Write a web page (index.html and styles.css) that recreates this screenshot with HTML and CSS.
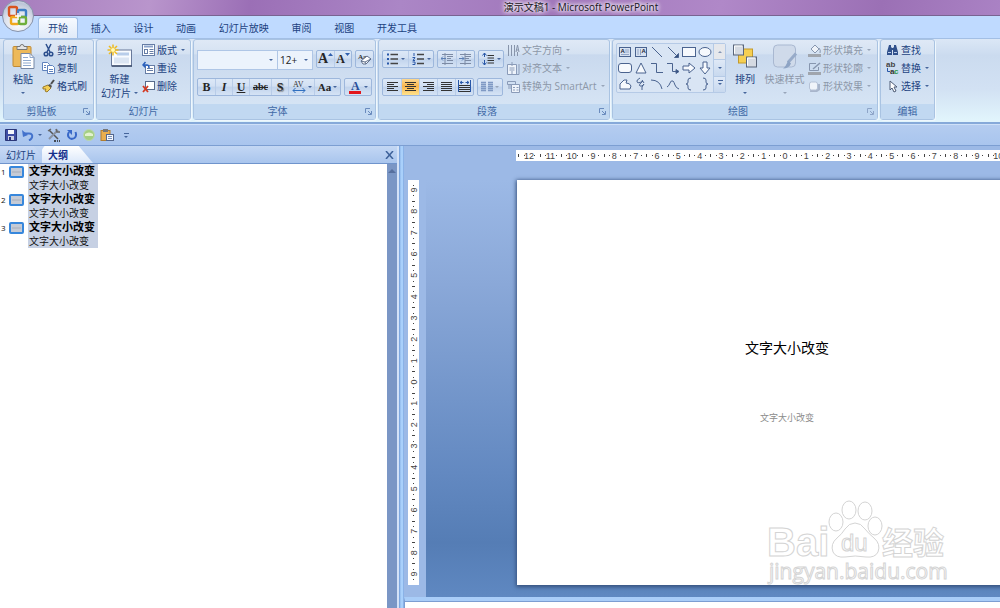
FILE: index.html
```html
<!DOCTYPE html>
<html lang="zh-CN">
<head>
  <meta charset="UTF-8">
  <meta name="viewport" content="width=device-width, initial-scale=1.0">
  <title>演示文稿1 - Microsoft PowerPoint</title>
  <link rel="stylesheet" href="styles.css">
</head>
<body>
  <header class="title-bar">
    <h1>演示文稿1 - Microsoft PowerPoint</h1>
    <button class="office-button" aria-label="Office">
      <svg width="22" height="22" viewBox="0 0 22 22" fill="none" stroke-width="2.4">
        <rect x="2" y="2" width="8" height="9" rx="1.5" stroke="#d9541e"/>
        <rect x="11" y="5" width="8" height="7" rx="1.5" stroke="#3f7fc6"/>
        <rect x="4" y="12" width="8" height="7" rx="1.5" stroke="#f0a81c"/>
        <rect x="12" y="12" width="7" height="7" rx="1.5" stroke="#6fae3c"/>
        <path d="M8 11h6M11 8v7" stroke="#fff" stroke-width="1.5"/>
      </svg>
    </button>
  </header>

  <nav class="ribbon-tabs">
    <button class="active">开始</button>
    <button>插入</button>
    <button>设计</button>
    <button>动画</button>
    <button>幻灯片放映</button>
    <button>审阅</button>
    <button>视图</button>
    <button>开发工具</button>
  </nav>

  <div class="ribbon">
    <!-- Clipboard -->
    <section class="group clipboard">
      <div class="group-body">
        <button class="big">
          <svg width="24" height="28" viewBox="0 0 24 28">
            <rect x="2" y="4" width="18" height="20" rx="1" fill="#edb95a" stroke="#c08a35"/>
            <path d="M6 6V4h3a2 2 0 0 1 4 0h3v3H6z" fill="#e4e4e4" stroke="#777"/>
            <path d="M10 11h9l4 4v11H10z" fill="#fff" stroke="#7587a5"/>
            <path d="M19 11v4h4M12 15h5M12 18h8M12 20.500h8M12 23h8" fill="none" stroke="#8fa9cf"/>
          </svg>
          <span>粘贴</span>
          <span><i class="arrow"></i></span>
        </button>
        <div class="stack">
          <button><svg width="13" height="14" viewBox="0 0 13 14" fill="none" stroke="#2c4f8e" stroke-width="1.500"><path d="M4 1l4 8M9 1L5 9"/><circle cx="4" cy="11" r="1.800"/><circle cx="9" cy="11" r="1.800"/></svg>剪切</button>
          <button><svg width="13" height="14" viewBox="0 0 13 14" fill="#fff" stroke="#5f82bd"><path d="M.5 1.500h5l2 2v6h-7z"/><path d="M5.500 4.500h5l2 2v6h-7z"/><path d="M7 8.500h4M7 10.500h4M2 4.500h2M2 6.500h2"/></svg>复制</button>
          <button><svg width="13" height="14" viewBox="0 0 13 14"><path d="M1 8l5-2 3 3-4 4-2-1 1-2-3 0z" fill="#f4cf55" stroke="#9a7b2b"/><path d="M6 6l2-1 2 2-1 2z" fill="#555"/><path d="M9 5l3-4" stroke="#4c4c4c" stroke-width="2"/></svg>格式刷</button>
        </div>
      </div>
      <footer><h2>剪贴板</h2><button class="launcher" aria-label="剪贴板选项"><svg width="7" height="7" viewBox="0 0 7 7" fill="none" stroke="#6a8bbd"><path d="M.5 5V.5H5M3 3l3 3M6.500 3v3.500H3"/></svg></button></footer>
    </section>

    <!-- Slides -->
    <section class="group slides">
      <div class="group-body">
        <button class="big">
          <svg width="26" height="26" viewBox="0 0 26 26">
            <rect x="4.500" y="6.500" width="20" height="16" fill="#f8fbff" stroke="#68799a"/>
            <path d="M5 22.500h20" stroke="#3d4d6b" stroke-width="1.500"/>
            <rect x="10" y="9" width="12" height="3" fill="#b8cdea"/>
            <rect x="7" y="14" width="15" height="6" fill="#dbe5f3"/>
            <path d="M6 1v11M.5 6.500h11M2 2.500l8 8M10 2.500l-8 8" stroke="#eebb20" stroke-width="1.500"/>
            <circle cx="6" cy="6.500" r="2" fill="#fff9b8"/>
          </svg>
          <span>新建</span>
          <span>幻灯片<i class="arrow"></i></span>
        </button>
        <div class="stack">
          <button><svg width="13" height="12" viewBox="0 0 13 12" fill="none" stroke="#667da5"><rect x=".5" y=".5" width="12" height="11" fill="#fff"/><path d="M2 2.500h9" stroke="#8ba3ca" stroke-width="2"/><rect x="2.500" y="5.500" width="3" height="4"/><path d="M7.500 5.500h4M7.500 7.500h4M7.500 9.500h4"/></svg>版式<i class="arrow"></i></button>
          <button><svg width="13" height="14" viewBox="0 0 13 14" fill="none" stroke="#667da5"><rect x="3.500" y="4.500" width="9" height="8" fill="#fff"/><path d="M5 7.500h6M5 9.500h6"/><path d="M1 4h4q2 0 2 3M3.500 1L1 4l2.500 2.500" stroke="#2a60bd" stroke-width="1.500"/></svg>重设</button>
          <button><svg width="13" height="13" viewBox="0 0 13 13" fill="none"><rect x="3.500" y="1.500" width="9" height="8" fill="#fff" stroke="#596b8b"/><path d="M1 6l5 6M6 6l-5 6" stroke="#d43a22" stroke-width="1.800"/></svg>删除</button>
        </div>
      </div>
      <footer><h2>幻灯片</h2></footer>
    </section>

    <!-- Font -->
    <section class="group font">
      <div class="group-body rows">
        <div class="row">
          <div class="combos">
            <select class="font-name" aria-label="字体"><option></option></select>
            <select class="font-size" aria-label="字号"><option>12+</option></select>
          </div>
          <div class="tools">
            <button class="serif grow" aria-label="增大字号">A<svg width="5" height="4" viewBox="0 0 5 4"><path d="M0 3h5L2.500 0z" fill="#2f5fae"/></svg></button>
            <button class="serif shrink" aria-label="缩小字号">A<svg width="5" height="4" viewBox="0 0 5 4"><path d="M0 0h5L2.500 3z" fill="#2f5fae"/></svg></button>
          </div>
          <div class="tools">
            <button aria-label="清除格式"><svg width="15" height="14" viewBox="0 0 15 14"><text x="1" y="7" font-size="7" font-weight="700" font-family="Liberation Serif" fill="#333">Aa</text><path d="M4 9l6-5 4 3-5 5H6z" fill="#fff" stroke="#60708c"/><path d="M4 9l4 1 6-3M8 10l1 2" fill="none" stroke="#60708c"/></svg></button>
          </div>
        </div>
        <div class="row">
          <div class="tools">
            <button class="serif bold">B</button>
            <button class="serif italic">I</button>
            <button class="serif underline">U</button>
            <button class="serif strike">abc</button>
            <button class="serif shadow">S</button>
            <button class="wide" aria-label="字符间距"><svg width="14" height="14" viewBox="0 0 14 14"><text x="1" y="7" font-size="8" font-family="Liberation Serif" fill="#333">AV</text><path d="M1 10.500h12M3.500 8L1 10.500 3.500 13M10.500 8l2.500 2.500-2.500 2.500" fill="none" stroke="#2f6fc0"/></svg><i class="arrow"></i></button>
            <button class="serif wide">Aa<i class="arrow"></i></button>
          </div>
          <div class="tools">
            <button class="wide" aria-label="字体颜色"><svg width="14" height="16" viewBox="0 0 14 16"><text x="3" y="11" font-size="12" font-weight="700" font-family="Liberation Serif" fill="#2a4f98">A</text><rect x="1" y="12" width="12" height="3" fill="#e2161c"/></svg><i class="arrow"></i></button>
          </div>
        </div>
      </div>
      <footer><h2>字体</h2><button class="launcher" aria-label="字体选项"><svg width="7" height="7" viewBox="0 0 7 7" fill="none" stroke="#6a8bbd"><path d="M.5 5V.5H5M3 3l3 3M6.500 3v3.500H3"/></svg></button></footer>
    </section>

    <!-- Paragraph -->
    <section class="group paragraph">
      <div class="group-body">
        <div class="rows">
          <div class="row">
            <div class="tools">
              <button class="wide" aria-label="项目符号"><svg width="13" height="12" viewBox="0 0 13 12"><path d="M4.500 1.500H12M4.500 6H12M4.500 10.500H12" stroke="#444" stroke-width="1.500"/><path d="M1 .5h2v2H1zM1 5h2v2H1zM1 9.500h2v2H1z" fill="#2857a8"/></svg><i class="arrow"></i></button>
              <button class="wide" aria-label="编号"><svg width="13" height="12" viewBox="0 0 13 12" fill="none"><path d="M5 1.500h7M5 6h7M5 10.500h7" stroke="#444" stroke-width="1.500"/><path d="M2 0v3M.5 4.500H3l-2 3h2M.5 9H3v2.500H.5" stroke="#2857a8"/></svg><i class="arrow"></i></button>
            </div>
            <div class="tools">
              <button aria-label="降低级别"><svg width="13" height="12" viewBox="0 0 13 12" fill="none" stroke="#7c8ba5"><path d="M1 1.500h11M6 3.500h6M6 5.500h4M6 7.500h6M1 10.500h11M4 0v12"/><path d="M5 5.500H0M2 3.500l-2 2 2 2" stroke="#5c80b5"/></svg></button>
              <button aria-label="提高级别"><svg width="13" height="12" viewBox="0 0 13 12" fill="none" stroke="#7c8ba5"><path d="M1 1.500h11M6 3.500h6M6 5.500h4M6 7.500h6M1 10.500h11M6 0v12"/><path d="M0 5.500h5M3 3.500l2 2-2 2" stroke="#5c80b5"/></svg></button>
            </div>
            <div class="tools">
              <button class="mid" aria-label="行距"><svg width="13" height="14" viewBox="0 0 13 14" fill="none"><path d="M5.500 3.500H12M5.500 6h6.500M5.500 8.500H12M5.500 11h6.500" stroke="#333"/><path d="M2.500 1v4M.5 3.500l2-2.500 2 2.500M2.500 8v5M.5 10.500l2 2.500 2-2.500" stroke="#2857a8"/></svg><i class="arrow"></i></button>
            </div>
          </div>
          <div class="row">
            <div class="tools">
              <button aria-label="左对齐"><svg width="13" height="12" viewBox="0 0 13 12"><path d="M1 1.500h11M1 3.500h7M1 5.500h11M1 7.500h7M1 9.500h11" stroke="#333"/></svg></button>
              <button class="on" aria-label="居中"><svg width="13" height="12" viewBox="0 0 13 12"><path d="M1 1.500h11M3 3.500h7M1 5.500h11M3 7.500h7M1 9.500h11" stroke="#333"/></svg></button>
              <button aria-label="右对齐"><svg width="13" height="12" viewBox="0 0 13 12"><path d="M1 1.500h11M5 3.500h7M1 5.500h11M5 7.500h7M1 9.500h11" stroke="#333"/></svg></button>
              <button aria-label="两端对齐"><svg width="13" height="12" viewBox="0 0 13 12"><path d="M1 1.500h11M1 3.500h11M1 5.500h11M1 7.500h11M1 9.500h11" stroke="#333"/></svg></button>
              <button aria-label="分散对齐"><svg width="13" height="14" viewBox="0 0 13 14" fill="none"><path d="M1 5.500h11M1 7.500h11M1 9.500h11M1 11.500h11" stroke="#333"/><path d="M.5 0v12M12.500 0v12M2 2.500h3.500M4 1L2 2.500 4 4M11 2.500H7.500M9 1l2 1.500L9 4" stroke="#2857a8"/></svg></button>
            </div>
            <div class="tools">
              <button class="mid" aria-label="分栏" disabled><svg width="12" height="12" viewBox="0 0 12 12"><path d="M0 1.500h5M0 3.500h5M0 5.500h5M0 7.500h5M0 9.500h5M7 1.500h5M7 3.500h5M7 5.500h5M7 7.500h5M7 9.500h5" stroke="#7f99c4" stroke-width="1.500"/></svg><i class="arrow"></i></button>
            </div>
          </div>
        </div>
        <div class="stack">
          <button disabled><svg width="13" height="13" viewBox="0 0 13 13" fill="none" stroke="#8794aa"><path d="M1.500 1v11M4.500 1v11M7.500 1v11M9 8l1.500-7L12 8M9.500 6h2M10.500 8v4"/></svg>文字方向<i class="arrow"></i></button>
          <button disabled><svg width="13" height="13" viewBox="0 0 13 13" fill="none" stroke="#8a9bb8"><path d="M.5 2.500h9v10h-9z" fill="#eef3fa"/><path d="M12 2v10.500H2M2.500 6h5M2.500 8h5M5 0v4M5 9v3"/></svg>对齐文本<i class="arrow"></i></button>
          <button disabled><svg width="13" height="13" viewBox="0 0 13 13" fill="none" stroke="#8a9bb8"><path d="M.5 1.500h8v3h-8zM1 6h3M1 8h3"/><path d="M4.500 4.500h8v8h-8z" fill="#eef3fa"/><path d="M6 7.500h2M9.500 7.500h2M6 10h2M9.500 10h2"/></svg>转换为 SmartArt<i class="arrow"></i></button>
        </div>
      </div>
      <footer><h2>段落</h2><button class="launcher" aria-label="段落选项"><svg width="7" height="7" viewBox="0 0 7 7" fill="none" stroke="#6a8bbd"><path d="M.5 5V.5H5M3 3l3 3M6.500 3v3.500H3"/></svg></button></footer>
    </section>

    <!-- Drawing -->
    <section class="group drawing">
      <div class="group-body">
        <div class="gallery">
          <div class="shapes">
            <button aria-label="文本框"><svg viewBox="0 0 14 14"><rect x="1.500" y="2.500" width="11" height="9" fill="#d7e2f2"/><text x="2.500" y="8" font-size="6" font-weight="700" font-family="Liberation Sans" fill="#223" stroke="none">A</text><path d="M7 5h4M7 7h4M3 9.500h8" stroke="#93a6c6"/></svg></button>
            <button aria-label="竖排文本框"><svg viewBox="0 0 14 14"><rect x="1.500" y="2.500" width="11" height="9" fill="#d7e2f2"/><text x="7.500" y="8" font-size="6" font-weight="700" font-family="Liberation Sans" fill="#223" stroke="none">A</text><path d="M4 4v6M6.500 4v6" stroke="#93a6c6"/></svg></button>
            <button aria-label="直线"><svg viewBox="0 0 14 14"><path d="M2 2l10 10"/></svg></button>
            <button aria-label="箭头"><svg viewBox="0 0 14 14"><path d="M2 2l10 10"/><path d="M12.500 12.500V8.500l-4 4z" fill="#33507f"/></svg></button>
            <button aria-label="矩形"><svg viewBox="0 0 14 14"><rect x=".5" y="2.500" width="13" height="9" fill="#f6f9fd"/></svg></button>
            <button aria-label="椭圆"><svg viewBox="0 0 14 14"><ellipse cx="7" cy="7" rx="6" ry="4.500" fill="#f6f9fd"/></svg></button>
            <button aria-label="圆角矩形"><svg viewBox="0 0 14 14"><rect x=".5" y="2.500" width="13" height="9" rx="2.500" fill="#f6f9fd"/></svg></button>
            <button aria-label="三角形"><svg viewBox="0 0 14 14"><path d="M7 2l5 10H2z" fill="#f6f9fd"/></svg></button>
            <button aria-label="肘形连接符"><svg viewBox="0 0 14 14"><path d="M1 2.500h5.500v9H13"/></svg></button>
            <button aria-label="肘形箭头"><svg viewBox="0 0 14 14"><path d="M1 2.500h5.500v8H10"/><path d="M10 8.500v4l3-2z" fill="#33507f"/></svg></button>
            <button aria-label="右箭头"><svg viewBox="0 0 14 14"><path d="M1 5h6V2l6 5-6 5V9H1z" fill="#f6f9fd"/></svg></button>
            <button aria-label="下箭头"><svg viewBox="0 0 14 14"><path d="M5 1h4v6h3l-5 6-5-6h3z" fill="#f6f9fd"/></svg></button>
            <button aria-label="任意多边形"><svg viewBox="0 0 14 14"><path d="M2 12V7l4-4h3L8 6q4 0 5 3l-1 3z" fill="#f6f9fd"/></svg></button>
            <button aria-label="自由曲线"><svg viewBox="0 0 14 14"><path d="M6 1q-4 2-3 4t6-1q-5 4-3 5t4-2q-3 3-2 6M8 3l2 3"/></svg></button>
            <button aria-label="弧形"><svg viewBox="0 0 14 14"><path d="M1 3q9 0 11 9"/></svg></button>
            <button aria-label="曲线"><svg viewBox="0 0 14 14"><path d="M1 10q2-1 3-4t3-2q1 1 2 4t4 4"/></svg></button>
            <button aria-label="左大括号"><svg viewBox="0 0 14 14"><path d="M9 1q-3 0-3 2v2q0 2-2 2 2 0 2 2v2q0 2 3 2"/></svg></button>
            <button aria-label="右大括号"><svg viewBox="0 0 14 14"><path d="M5 1q3 0 3 2v2q0 2 2 2-2 0-2 2v2q0 2-3 2"/></svg></button>
          </div>
          <div class="gallery-scroll">
            <button aria-label="上一行" disabled><i class="arrow up"></i></button>
            <button aria-label="下一行"><i class="arrow"></i></button>
            <button aria-label="其他"><i class="arrow more"></i></button>
          </div>
        </div>
        <button class="big arrange">
          <svg width="26" height="26" viewBox="0 0 26 26" stroke-width="1">
            <rect x="6.500" y="5.500" width="14" height="14" fill="#f6cf52" stroke="#c39a2c"/>
            <rect x="1.500" y="1.500" width="10" height="10" fill="#d5dae2" stroke="#59657a"/>
            <rect x="14.500" y="13.500" width="10" height="10" fill="#d5dae2" stroke="#59657a"/>
            <path d="M2.500 10V2.500H10M15.500 22v-7.500H23" fill="none" stroke="#fff"/>
          </svg>
          <span>排列</span>
          <span><i class="arrow"></i></span>
        </button>
        <button class="big quick" disabled>
          <svg width="26" height="26" viewBox="0 0 26 26">
            <rect x="1.500" y="1.500" width="22" height="22" rx="4" fill="#cfdaea" stroke="#a9b8d1"/>
            <path d="M24 10l-8 9" stroke="#97abc9" stroke-width="3"/>
            <path d="M16 17l3 3q-2 5-8 5 3-2 5-8z" fill="#8da3c4"/>
          </svg>
          <span>快速样式</span>
          <span><i class="arrow"></i></span>
        </button>
        <div class="stack">
          <button disabled><svg width="13" height="13" viewBox="0 0 13 13"><path d="M3 5l4-4 4 4-4 4z" fill="#eef2f8" stroke="#8796af"/><path d="M11 4q2 2 1 5" fill="none" stroke="#8796af"/><rect y="10" width="13" height="3" fill="#a0a5ad"/></svg>形状填充<i class="arrow"></i></button>
          <button disabled><svg width="13" height="13" viewBox="0 0 13 13" fill="none"><path d="M8 1.500H1.500v7h9V5" stroke="#8796af"/><path d="M5 7l7-6" stroke="#8796af" stroke-width="1.500"/><rect y="10" width="13" height="3" fill="#a0a5ad"/></svg>形状轮廓<i class="arrow"></i></button>
          <button disabled><svg width="13" height="13" viewBox="0 0 13 13"><path d="M3 4h9v6l-3 2H2z" fill="#a8b5cb"/><rect x="1.500" y="2" width="8" height="8" rx="2" fill="#f0f4fa" stroke="#b5c2d7"/></svg>形状效果<i class="arrow"></i></button>
        </div>
      </div>
      <footer><h2>绘图</h2><button class="launcher" aria-label="绘图选项" disabled><svg width="7" height="7" viewBox="0 0 7 7" fill="none" stroke="#8ea5c8"><path d="M.5 5V.5H5M3 3l3 3M6.500 3v3.500H3"/></svg></button></footer>
    </section>

    <!-- Editing -->
    <section class="group editing">
      <div class="group-body">
        <div class="stack">
          <button><svg width="13" height="12" viewBox="0 0 13 12" fill="#31518c"><path d="M3 1h2v2l1 1v7H1V8zM8 1h2l2 7v3H7V4l1-1z"/><path d="M5 4h3v2H5z"/><path d="M2 8.500h3M8 8.500h3" stroke="#b9cdec"/></svg>查找</button>
          <button><svg width="13" height="14" viewBox="0 0 13 14" font-family="Liberation Sans" font-size="8" font-weight="700"><text x="0" y="6" fill="#444">ab</text><text x="4" y="13" fill="#333">a</text><text x="8" y="13" fill="#2e9444">c</text><path d="M1.500 7v3.500H4" fill="none" stroke="#2857a8"/></svg>替换<i class="arrow"></i></button>
          <button><svg width="13" height="13" viewBox="0 0 13 13"><path d="M4 1v9l2-2 2 4 2-1-2-4h3z" fill="#fff" stroke="#4e5c76"/></svg>选择<i class="arrow"></i></button>
        </div>
      </div>
      <footer><h2>编辑</h2></footer>
    </section>
  </div>

  <div class="quick-access">
    <button aria-label="保存"><svg width="12" height="12" viewBox="0 0 12 12"><path d="M.5.5h11v11h-11z" fill="#3e4ea5" stroke="#2a3678"/><path d="M3 1h6v4H3z" fill="#f4f6fb"/><path d="M3 7h6v4H3z" fill="#c9cfe2"/><path d="M4 8h2v3H4z" fill="#28347a"/></svg></button>
    <button class="undo" aria-label="撤消"><svg width="12" height="12" viewBox="0 0 12 12" fill="none"><path d="M2 4.500h5q4 0 3 4-1 2-3 3" stroke="#4372cc" stroke-width="2"/><path d="M0 1l1 7 5-2z" fill="#4372cc"/></svg><i class="arrow"></i></button>
    <button aria-label="工具"><svg width="14" height="14" viewBox="0 0 14 14" fill="none"><path d="M2 2l9 9" stroke="#555" stroke-width="1.500"/><path d="M11 2l-9 9" stroke="#8a93a3" stroke-width="2"/><path d="M1 3l3-2M9 1l1 3 3 0" stroke="#666" stroke-width="1.500"/><path d="M7 13h2M10 13h1M12 13h1" stroke="#222" stroke-width="1.500"/></svg></button>
    <button aria-label="重复"><svg width="12" height="12" viewBox="0 0 12 12" fill="none"><path d="M3 3q-2 3 0 5.500t5.500 .5q2.500-2 1-6" stroke="#3868c8" stroke-width="2"/><path d="M1 1h5v5z" fill="#3868c8"/></svg></button>
    <button aria-label="开始"><svg width="12" height="12" viewBox="0 0 12 12"><circle cx="6" cy="6" r="5.500" fill="#a4cf83" stroke="#b9d5b5"/><path d="M2 5q4-3 8 0v2H2z" fill="#e3f2cf"/></svg></button>
    <button aria-label="粘贴"><svg width="14" height="13" viewBox="0 0 14 13"><rect x="1" y="1.500" width="9" height="10" fill="#e9ae4e" stroke="#b07d30"/><path d="M3 0h5v3H3z" fill="#777"/><rect x="6.500" y="5.500" width="7" height="6" fill="#f5f8fd" stroke="#53668c"/><path d="M8 7.500h4M8 9.500h4" stroke="#7b93bb"/></svg></button>
    <button aria-label="自定义快速访问工具栏"><i class="arrow more"></i></button>
  </div>

  <main class="workspace">
    <aside class="outline-pane">
      <div class="pane-tabs">
        <button class="slides-tab">幻灯片</button>
        <button class="outline-tab">大纲</button>
        <button class="pane-close" aria-label="关闭"><svg width="9" height="8" viewBox="0 0 9 8"><path d="M1 0l7 8M8 0L1 8" stroke="#3d6199" stroke-width="1.500"/></svg></button>
      </div>
      <div class="pane-content">
        <ol class="outline">
          <li><svg width="15" height="12" viewBox="0 0 15 12"><rect x="1" y="1" width="13" height="10" rx="1" fill="#c5cbd6" stroke="#3787dc" stroke-width="2"/><path d="M3 6h9" stroke="#a8adb8"/></svg><div><strong>文字大小改变</strong><p>文字大小改变</p></div></li>
          <li><svg width="15" height="12" viewBox="0 0 15 12"><rect x="1" y="1" width="13" height="10" rx="1" fill="#c5cbd6" stroke="#3787dc" stroke-width="2"/><path d="M3 6h9" stroke="#a8adb8"/></svg><div><strong>文字大小改变</strong><p>文字大小改变</p></div></li>
          <li><svg width="15" height="12" viewBox="0 0 15 12"><rect x="1" y="1" width="13" height="10" rx="1" fill="#c5cbd6" stroke="#3787dc" stroke-width="2"/><path d="M3 6h9" stroke="#a8adb8"/></svg><div><strong>文字大小改变</strong><p>文字大小改变</p></div></li>
        </ol>
        <div class="scrollbar"><i class="arrow up"></i></div>
      </div>
    </aside>
    <div class="splitter"></div>
    <section class="editor">
      <div class="ruler-row"><svg class="ruler-h" id="rulerH" width="540" height="11"></svg></div>
      <div class="canvas-row">
        <div class="ruler-col"><svg class="ruler-v" id="rulerV" width="11" height="405"></svg></div>
        <div class="canvas">
          <article class="slide">
            <h3>文字大小改变</h3>
            <p>文字大小改变</p>
            <svg class="watermark" width="184" height="92" viewBox="0 0 184 92" fill="#fff" stroke="#d4d4d4" stroke-width="1">
              <text x="1" y="61" class="wm-logo">Bai</text>
              <ellipse cx="70" cy="27" rx="7" ry="9"/>
              <ellipse cx="83" cy="15" rx="7" ry="9"/>
              <ellipse cx="99" cy="16" rx="7" ry="9"/>
              <ellipse cx="109" cy="31" rx="7" ry="9"/>
              <path d="M89 28q6 0 10 6 4 5 9 9 7 6 4 14-3 6-12 5-11-2-21 0-9 1-12-5-3-8 4-14 5-4 8-9 4-6 10-6z"/>
              <text x="75" y="56" class="wm-du">du</text>
              <text x="116" y="59" class="wm-cn">经验</text>
              <text x="3" y="84" class="wm-url">jingyan.baidu.com</text>
            </svg>
          </article>
        </div>
      </div>
      <div class="notes"></div>
    </section>
  </main>

  <script>
    // Draws a ruler numbered outwards from zero, with a half tick and two dots per unit
    function drawRuler(id, max, middle, vertical) {
      const step = 64 / 3;
      let marks = '';
      for (let i = -max; i <= max; i++) {
        const pos = middle + i * step;
        const spin = vertical ? ' transform="rotate(-90 6 ' + pos + ')"' : '';
        const x = vertical ? 6 : pos;
        const y = vertical ? pos + 3 : 9;
        marks += '<text x="' + x + '" y="' + y + '"' + spin + '>' + Math.abs(i) + '</text>';
        [[-0.5, 3], [-0.25, 1], [0.25, 1]].forEach(function (mark) {
          const p = Math.round(pos + mark[0] * step);
          const from = 6 - (mark[1] + 1) / 2;
          marks += vertical
            ? '<rect x="' + from + '" y="' + p + '" width="' + mark[1] + '" height="1"/>'
            : '<rect x="' + p + '" y="' + from + '" width="1" height="' + mark[1] + '"/>';
        });
      }
      document.getElementById(id).innerHTML = marks;
    }

    drawRuler('rulerH', 12, 269, false);
    drawRuler('rulerV', 9, 202, true);
  </script>
</body>
</html>
```

FILE: styles.css
```css
* {
  box-sizing: border-box;
}
body {
  margin: 0;
  height: 100vh;
  display: flex;
  flex-direction: column;
  overflow: hidden;
  background: #a6c2ec;
  color: #1c427f;
  font-family: "Open Sans", "Noto Sans CJK SC", sans-serif;
  font-size: 10px;
  line-height: 14px;
}
h1, h2, h3, p, ol {
  margin: 0;
  padding: 0;
  font-weight: normal;
}
button, select {
  margin: 0;
  padding: 0;
  border: none;
  background: none;
  color: inherit;
  font: inherit;
  white-space: nowrap;
}
svg {
  display: block;
  flex: none;
}
button:disabled {
  color: #8c97a8;
}
.arrow {
  flex: none;
  display: inline-block;
  border: 2px solid transparent;
  border-top-color: #45659b;
  border-bottom: none;
}
button:disabled .arrow {
  border-top-color: #98a5b9;
}
.arrow.up {
  border-top: none;
  border-bottom: 2px solid #8496b5;
}
.arrow.more {
  position: relative;
}
.arrow.more::before {
  content: "";
  position: absolute;
  left: -2px;
  top: -5px;
  width: 5px;
  height: 1px;
  background: #45659b;
}

/* Title bar */
.title-bar {
  position: relative;
  height: 16px;
  padding-left: 162px;
  background: linear-gradient(100deg, #a57bbc, #b995cc 15%, #9b6fb6 25%, #ab86c6 40%, #a177bb 55%, #b088c8 72%, #9b70b5 88%, #aa82c4);
  border-bottom: 1px solid #796391;
}
.title-bar h1 {
  color: #181522;
  font-size: 10px;
  text-align: center;
  text-shadow: 0 0 4px #fff, 0 0 4px #fff, 0 0 6px #fff;
}
.office-button {
  position: absolute;
  left: 2px;
  top: 0;
  z-index: 2;
  width: 32px;
  height: 32px;
  display: flex;
  align-items: center;
  justify-content: center;
  border: 1px solid #8793ab;
  border-radius: 50%;
  background: radial-gradient(circle at 50% 75%, #fff, #dfe4ee 45%, #bcc5d7 75%, #eef1f7);
}

/* Ribbon */
.ribbon-tabs {
  flex: none;
  display: flex;
  justify-content: space-between;
  height: 22px;
  width: 100%;
  padding: 1px calc(100% - 427px) 0 38px;
  background: #bfdaff;
}
.ribbon-tabs button {
  padding: 0 10px;
}
.ribbon-tabs .active {
  background: linear-gradient(#f6faff, #e0eaf8);
  border: 1px solid #9ebde6;
  border-bottom: none;
  border-radius: 3px 3px 0 0;
  padding: 0 9px;
}
.ribbon {
  flex: none;
  display: flex;
  gap: 2px;
  height: 86px;
  padding: 0 3px 2px;
  background: linear-gradient(#dbe7f6, #cbdbef 20%, #d2e1f3 60%, #e1f4fc 97%);
  border-top: 1px solid #a3bfe5;
  border-bottom: 2px solid #86a9d9;
}
.group {
  flex: none;
  display: flex;
  flex-direction: column;
  border: 1px solid #a9c3e2;
  border-radius: 3px;
  background: linear-gradient(#dfe9f6, #d5e2f2 17%, #c9d9ee 19%, #d9e7f6);
  box-shadow: 1px 1px 0 #eff7fd;
}
.clipboard {
  width: 91px;
}
.slides {
  width: 95px;
}
.font {
  width: 183px;
}
.paragraph {
  width: 232px;
}
.drawing {
  width: 266px;
}
.editing {
  width: 55px;
}
.group-body {
  flex: 1;
  display: flex;
  gap: 1px;
  padding: 1px 2px 0;
}
.group footer {
  display: flex;
  height: 15px;
  background: #c1d8f1;
  color: #3f69a6;
}
.group h2 {
  flex: 1;
  font-size: 10px;
  text-align: center;
}
.launcher {
  width: 14px;
  display: flex;
  align-items: center;
  justify-content: center;
}
.big {
  display: flex;
  flex-direction: column;
  align-items: center;
  width: 34px;
}
.big svg {
  height: 31px;
}
.big span {
  display: flex;
  align-items: center;
  justify-content: center;
  gap: 3px;
  height: 14px;
}
.slides .big {
  width: 41px;
}
.stack {
  display: flex;
  flex-direction: column;
}
.stack button {
  display: flex;
  align-items: center;
  gap: 2px;
  height: 18px;
  padding: 0 1px;
}
.stack .arrow {
  margin-left: 2px;
}

/* Small tool buttons */
.rows {
  display: flex;
  flex-direction: column;
  gap: 10px;
}
.group-body.rows {
  gap: 10px;
  padding: 10px 3px 0;
}
.paragraph .rows {
  padding: 9px 1px 0;
}
.row {
  display: flex;
  gap: 3px;
  height: 18px;
}
.tools {
  display: flex;
  border: 1px solid #9db7dc;
  border-radius: 2px;
  background: linear-gradient(#dce8f7, #d2e0f3 45%, #c1d3ec 50%, #d5e3f5);
}
.tools button {
  display: flex;
  align-items: center;
  justify-content: center;
  gap: 2px;
  width: 17px;
}
.tools button + button {
  border-left: 1px solid #b8cce8;
}
.paragraph .tools button {
  width: 18px;
}
.paragraph .tools .wide {
  width: 25px;
}
.tools .wide {
  width: 26px;
}
.paragraph .tools .mid {
  width: 24px;
}
.tools .on {
  background: linear-gradient(#fbd994, #f8b64e 45%, #ffe28c);
}
.serif {
  color: #262626;
  font-family: "Liberation Serif", serif;
  font-size: 12px;
  font-weight: bold;
}
.tools .grow, .tools .shrink {
  gap: 0;
  align-items: center;
}
.grow {
  font-size: 14px;
}
.grow svg, .shrink svg {
  margin-bottom: 8px;
}
.italic {
  font-style: italic;
}
.underline {
  text-decoration: underline;
}
.serif.wide {
  font-size: 11px;
}
.tools .strike {
  width: 22px;
  font-size: 10px;
  text-decoration: line-through;
}
.shadow {
  text-shadow: 1px 1px 1px #777;
}
.combos {
  display: flex;
  height: 20px;
}
.combos select {
  appearance: none;
  border: 1px solid #afc6e6;
  border-radius: 0;
  background: #ecf3fc url("data:image/svg+xml,%3Csvg xmlns='http://www.w3.org/2000/svg' width='4' height='2'%3E%3Cpath d='M0 0h4L2 2z' fill='%2345659b'/%3E%3C/svg%3E") no-repeat right 4px center;
  color: #222;
}
.font-name {
  width: 81px;
}
.combos .font-size {
  width: 35px;
  padding-left: 2px;
  border-left: none;
}

/* Shape gallery */
.drawing .group-body {
  gap: 2px;
  padding-left: 3px;
}
.gallery {
  display: flex;
  height: 50px;
  margin-top: 2px;
  border: 1px solid #b5cae6;
  border-radius: 2px;
  background: #d9e5f4;
}
.shapes {
  display: grid;
  grid-template-columns: repeat(6, 16px);
  grid-template-rows: repeat(3, 16px);
}
.shapes button {
  display: flex;
  align-items: center;
  justify-content: center;
}
.shapes svg {
  width: 14px;
  height: 14px;
  fill: none;
  stroke: #4a638f;
}
.gallery-scroll {
  width: 12px;
  display: flex;
  flex-direction: column;
  border-left: 1px solid #b5cae6;
}
.gallery-scroll button {
  flex: 1;
  display: flex;
  align-items: center;
  justify-content: center;
  background: linear-gradient(#dfe9f7, #c8d9ef);
}
.gallery-scroll button + button {
  border-top: 1px solid #b5cae6;
}
.gallery-scroll button:disabled {
  background: #e6e8ec;
}
.drawing .quick {
  width: 41px;
}
.editing .group-body {
  padding-left: 4px;
}

/* Quick access toolbar */
.quick-access {
  flex: none;
  display: flex;
  align-items: center;
  gap: 5px;
  height: 22px;
  padding-left: 5px;
  background: linear-gradient(#b4ccf0, #a9c5ee);
  border-top: 1px solid #cfe0f8;
  border-bottom: 1px solid #7c9ed2;
}
.quick-access button {
  display: flex;
  align-items: center;
  gap: 4px;
}
.quick-access .arrow.more {
  margin: 3px 0 0 5px;
}

/* Outline pane */
.workspace {
  flex: 1;
  min-height: 0;
  display: flex;
}
.outline-pane {
  flex: none;
  width: 399px;
  display: flex;
  flex-direction: column;
  border-right: 2px solid #d4e2f7;
}
.pane-tabs {
  display: flex;
  height: 18px;
  background: linear-gradient(#c3d7f4, #a9c5ed);
  border-bottom: 1px solid #6f94cc;
}
.slides-tab, .outline-tab {
  padding-left: 6px;
  text-align: left;
}
.slides-tab {
  width: 42px;
  background: linear-gradient(#c9daf5, #b0caef);
  clip-path: polygon(0 0, 80% 0, 100% 60%, 100% 100%, 0 100%);
}
.outline-tab {
  width: 51px;
  background: linear-gradient(#fff, #dbe8fa);
  clip-path: polygon(0 20%, 5% 0, 72% 0, 100% 100%, 0 100%);
  color: #142f8c;
  font-weight: bold;
}
.pane-close {
  margin-left: auto;
  padding: 0 3px;
}
.pane-content {
  flex: 1;
  display: flex;
  background: #fff;
}
.outline {
  flex: 1;
  list-style: none;
  counter-reset: slide;
  color: #111;
}
.outline li {
  counter-increment: slide;
  display: flex;
}
.outline li::before {
  content: counter(slide);
  width: 8px;
  padding-left: 1px;
  font-size: 8px;
  line-height: 16px;
}
.outline svg {
  margin: 2px 4px 0 0;
}
.outline div {
  padding: 0 3px 0 1px;
  background: #c6d0e3;
}
.outline li::before {
  flex: none;
}
.outline strong {
  display: block;
  color: #000;
  font-size: 11px;
}
.scrollbar {
  width: 10px;
  padding-top: 5px;
  background: #7a96c5;
  line-height: 0;
  text-align: center;
}
.scrollbar .arrow {
  border: 4px solid transparent;
  border-top: none;
  border-bottom: 4px solid #566f9e;
}
.splitter {
  width: 5px;
  background: linear-gradient(90deg, #6f9ad6, #a9d0fb 40%, #a9d0fb 70%, #7ba3dc);
}

/* Slide editor */
.editor {
  flex: 1;
  min-width: 0;
  display: flex;
  flex-direction: column;
  overflow: hidden;
  background: #9cb9e6;
}
.ruler-row {
  height: 34px;
  padding: 4px 0 0 112px;
}
.ruler-h, .ruler-v {
  background: #fff;
  fill: #444;
  font-family: "Liberation Sans", sans-serif;
  font-size: 9px;
  text-anchor: middle;
}
.canvas-row {
  flex: 1;
  display: flex;
  min-height: 0;
}
.ruler-col {
  flex: none;
  width: 22px;
  padding-left: 4px;
}
.canvas {
  flex: 1;
  min-width: 0;
  padding-left: 91px;
  background: linear-gradient(#9cb9e6, #8aa8d8 25%, #6389c1 70%, #557db5 87%, #5f88c1);
}
.slide {
  position: relative;
  width: 540px;
  height: 405px;
  padding-top: 158px;
  background: #fff;
  box-shadow: 0 1px 4px 1px #35507c;
  color: #000;
  text-align: center;
}
.slide h3 {
  font-size: 14px;
  line-height: 20px;
}
.slide p {
  margin-top: 53px;
  color: #8c8c8c;
  font-size: 9px;
}
.watermark {
  position: absolute;
  left: 249px;
  top: 315px;
}
.wm-logo, .wm-du, .wm-cn, .wm-url {
  font-family: "Liberation Sans", "Noto Sans CJK SC", sans-serif;
}
.wm-logo {
  font-size: 40px;
  font-weight: bold;
}
.wm-du {
  font-size: 24px;
}
.wm-cn {
  font-size: 31px;
  font-weight: bold;
}
.watermark .wm-url {
  font-family: "Open Sans", sans-serif;
  font-size: 21px;
}
.notes {
  height: 11px;
  background: #fff;
  border-top: 4px solid #a9cdf8;
  border-left: 1px solid #7c9ed2;
  box-shadow: inset 0 1px 0 #7c9ed2;
}
```
